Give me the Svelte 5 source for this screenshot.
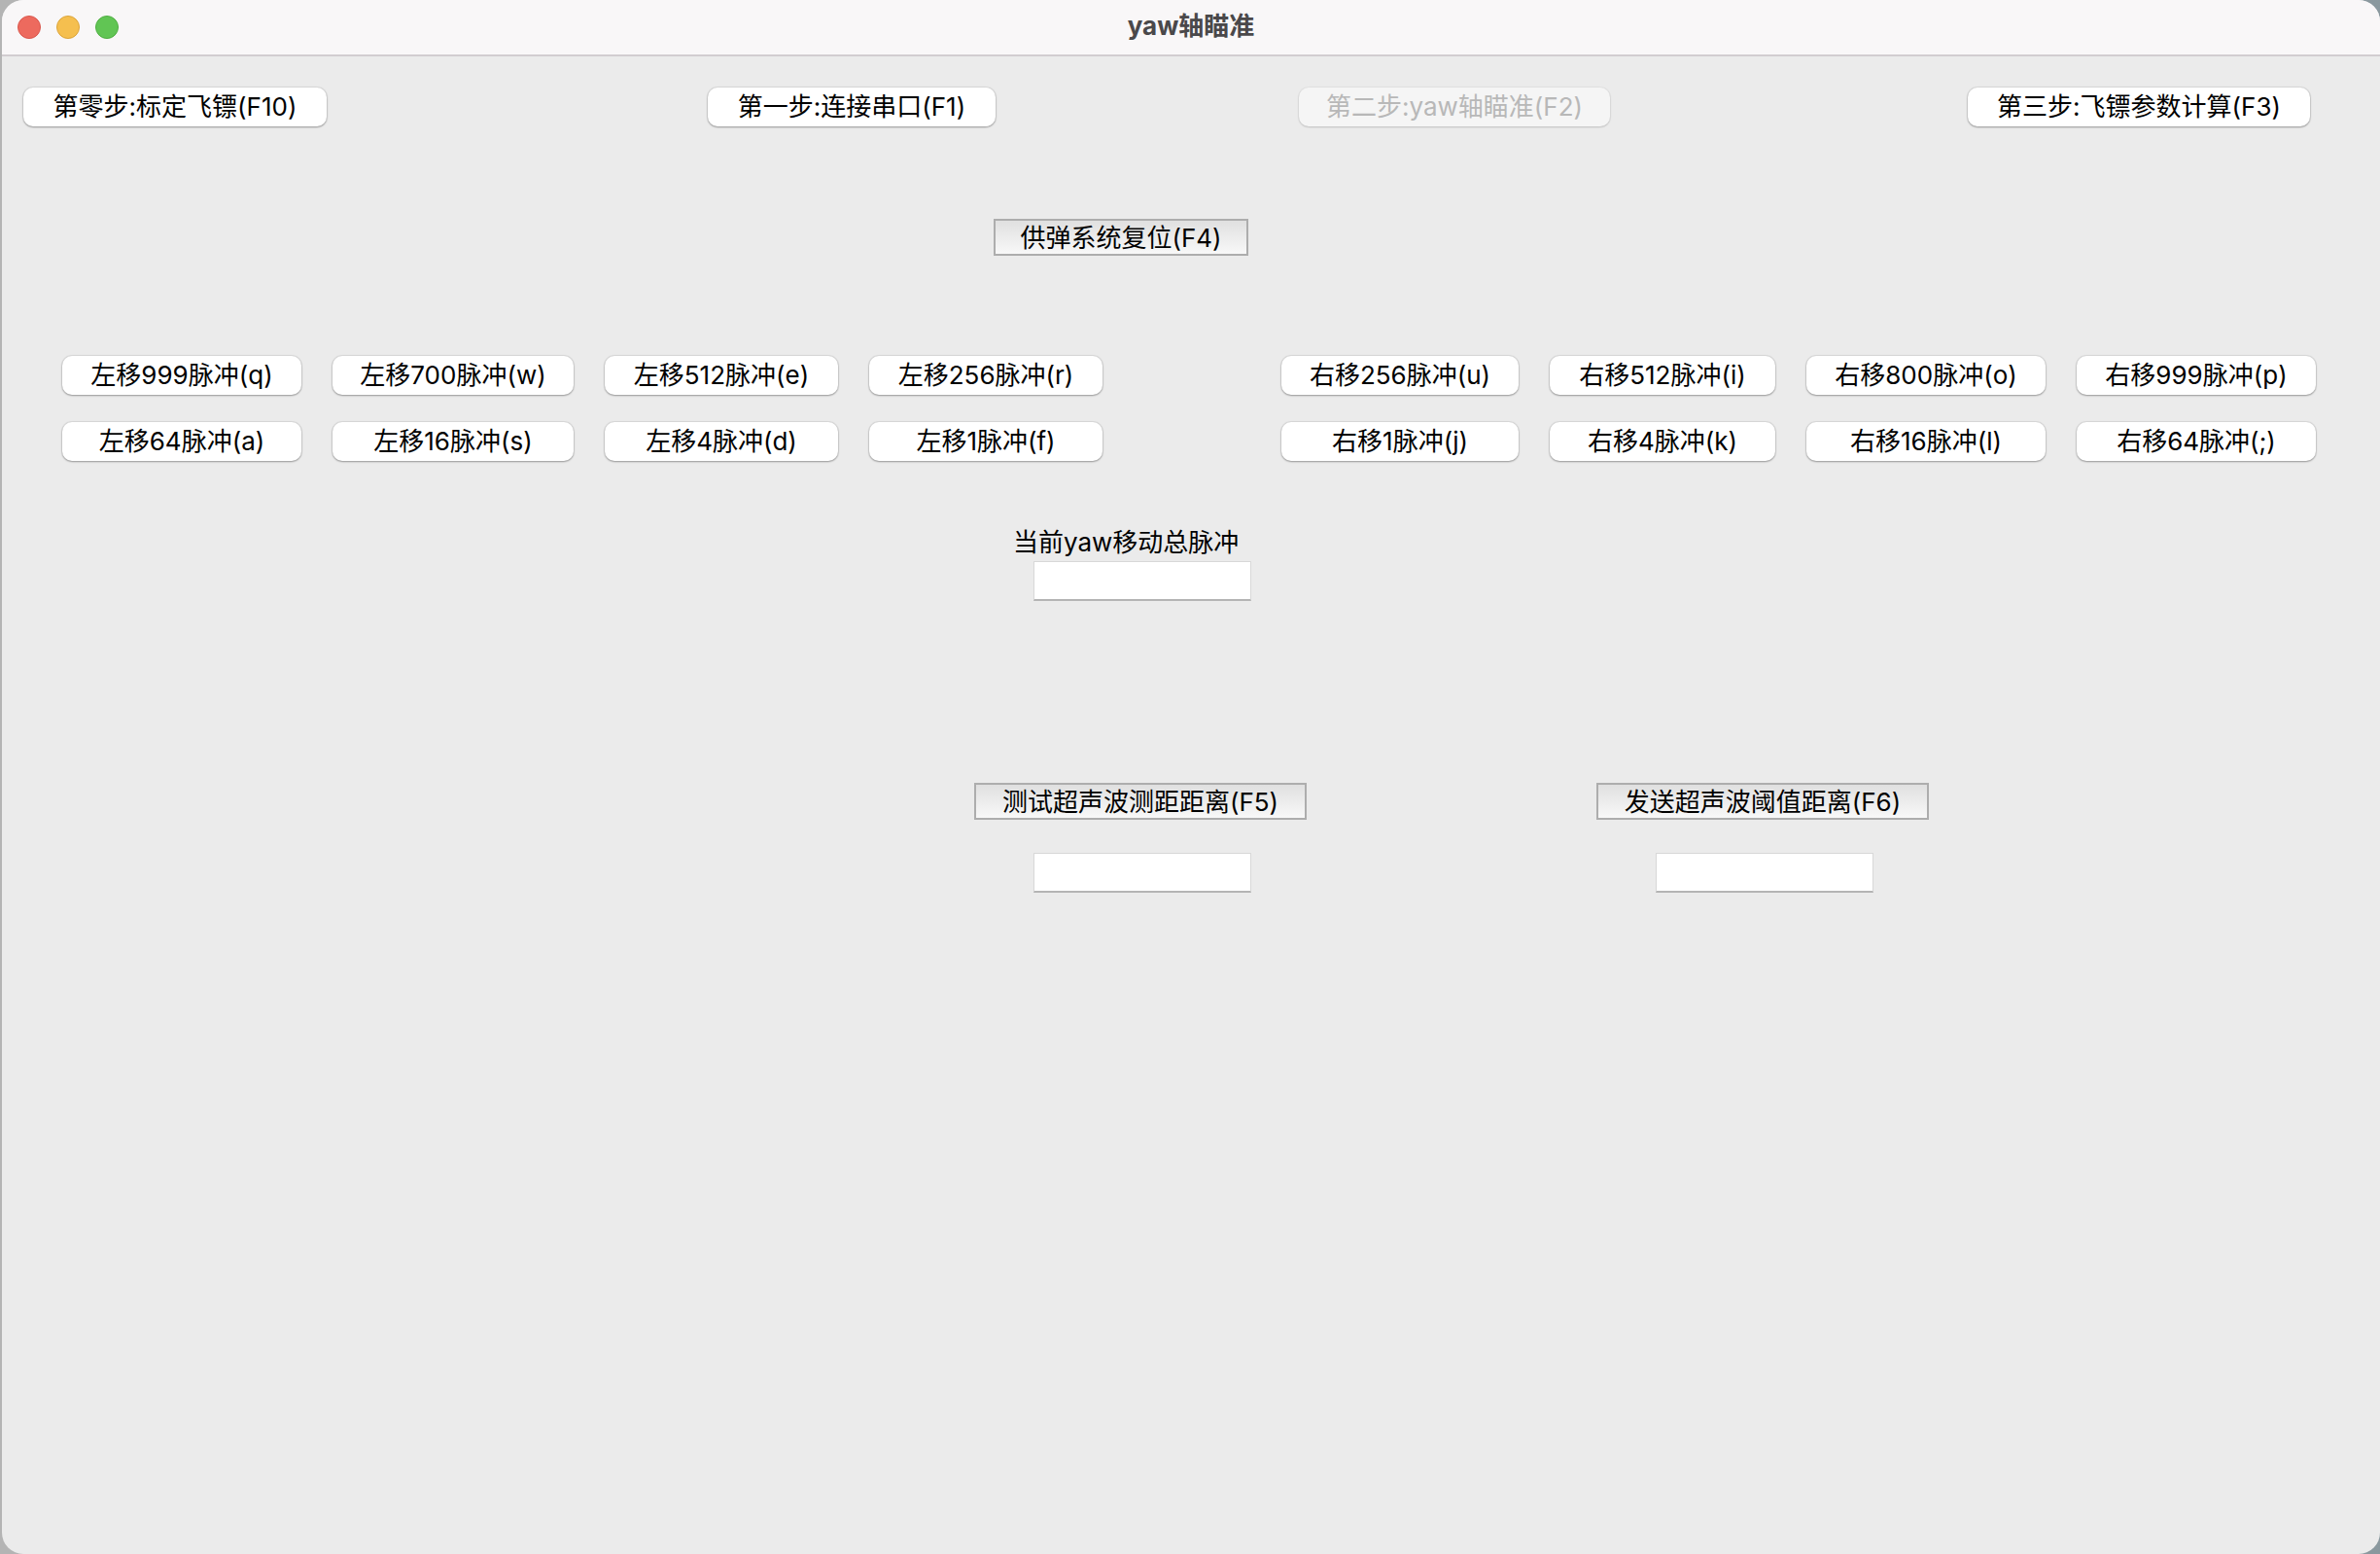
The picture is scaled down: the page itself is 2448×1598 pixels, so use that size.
<script>
  const steps = [
    { label: '第零步:标定飞镖(F10)', size: 'w312' },
    { label: '第一步:连接串口(F1)', size: 'w296' },
    { label: '第二步:yaw轴瞄准(F2)', size: 'w320', disabled: true },
    { label: '第三步:飞镖参数计算(F3)', size: 'w352' }
  ];

  const moves = [
    ['左移999脉冲(q)', '左移700脉冲(w)', '左移512脉冲(e)', '左移256脉冲(r)', null,
     '右移256脉冲(u)', '右移512脉冲(i)', '右移800脉冲(o)', '右移999脉冲(p)'],
    ['左移64脉冲(a)', '左移16脉冲(s)', '左移4脉冲(d)', '左移1脉冲(f)', null,
     '右移1脉冲(j)', '右移4脉冲(k)', '右移16脉冲(l)', '右移64脉冲(;)']
  ];

  const ranges = [
    { id: 'measured', label: '测试超声波测距距离(F5)' },
    { id: 'threshold', label: '发送超声波阈值距离(F6)' }
  ];
</script>

<div class="desktop">
  <main class="window">
    <header class="titlebar">
      <div class="lights">
        <button class="light close" aria-label="关闭"></button>
        <button class="light minimize" aria-label="最小化"></button>
        <button class="light zoom" aria-label="缩放"></button>
      </div>
      <h1>yaw轴瞄准</h1>
    </header>

    <nav class="steps">
      {#each steps as step}
        <button class="push {step.size}" disabled={step.disabled}>{step.label}</button>
      {/each}
    </nav>

    <section class="reset">
      <button class="bevel">供弹系统复位(F4)</button>
    </section>

    <section class="moves">
      {#each moves as row}
        {#each row as label}
          {#if label}
            <button class="push">{label}</button>
          {:else}
            <span></span>
          {/if}
        {/each}
      {/each}
    </section>

    <section class="total">
      <div class="field">
        <label for="total">当前yaw移动总脉冲</label>
        <input id="total" type="text" />
      </div>
    </section>

    <section class="ranges">
      <span></span>
      {#each ranges as range}
        <div class="range">
          <button class="bevel wide">{range.label}</button>
          <input id={range.id} type="text" aria-label={range.label} />
        </div>
      {/each}
    </section>
  </main>
</div>

<style>
  :global(body) {
    margin: 0;
  }

  .desktop,
  .desktop * {
    box-sizing: border-box;
  }

  .desktop {
    display: flex;
    min-height: 100vh;
    padding-left: 2px;
    background: linear-gradient(90deg, #b4b4b4, #b4b4b4 50%, #8a989e);
    font-family: Inter, 'Noto Sans CJK SC', sans-serif;
    font-size: 26px;
    line-height: 32px;
    color: #000;
  }

  .window {
    flex: 1;
    min-width: 0;
    overflow: hidden;
    border-radius: 22px;
    background: #ebebeb;
  }

  .titlebar {
    display: grid;
    grid-template-columns: 1fr auto 1fr;
    align-items: center;
    height: 58px;
    padding: 0 16px;
    border-bottom: 2px solid #d2cdd0;
    background: #f9f7f8;
  }

  .lights {
    display: flex;
    gap: 16px;
  }

  .light {
    width: 24px;
    height: 24px;
    padding: 0;
    border: 1px solid;
    border-radius: 50%;
  }

  .close {
    border-color: #d9584e;
    background: #ed6a5e;
  }

  .minimize {
    border-color: #dba43b;
    background: #f5bf4f;
  }

  .zoom {
    border-color: #50ae43;
    background: #61c554;
  }

  h1 {
    margin: 0;
    padding-bottom: 2px;
    font-size: 26px;
    line-height: 32px;
    font-weight: 700;
    color: #4a484a;
  }

  button {
    font: inherit;
    color: inherit;
    white-space: nowrap;
  }

  .push {
    height: 40px;
    padding: 0;
    border: 0;
    border-radius: 10px;
    background: #fff;
    box-shadow: 0 0 1px 1px rgba(0, 0, 0, 0.08), 0 1px 2px rgba(0, 0, 0, 0.3);
  }

  .push:disabled {
    background: #f5f5f5;
    box-shadow: 0 0 1px 1px rgba(0, 0, 0, 0.04), 0 1px 2px rgba(0, 0, 0, 0.15);
    color: #b8b8b8;
  }

  .w312 {
    width: 312px;
  }

  .w296 {
    width: 296px;
  }

  .w320 {
    width: 320px;
  }

  .w352 {
    width: 352px;
  }

  .bevel {
    width: 262px;
    height: 38px;
    padding: 2px 0 0;
    border: 2px solid #adadad;
    background: linear-gradient(#e0e0e0, #f8f8f8);
  }

  .bevel.wide {
    width: 342px;
  }

  input {
    width: 224px;
    height: 41px;
    padding: 0 8px;
    border: 1px solid #d8d8d8;
    border-bottom: 2px solid #b4b4b4;
    background: #fff;
    font: inherit;
  }

  .steps {
    display: grid;
    grid-template-columns: 704fr 608fr 688fr 424fr;
    justify-items: start;
    padding: 32px 0 0 22px;
  }

  .reset {
    display: grid;
    grid-template-columns: 1020fr auto 1164fr;
    padding-top: 95px;
  }

  .reset .bevel {
    grid-column: 2;
  }

  .moves {
    display: grid;
    grid-template-columns: 246fr 248fr 240fr 240fr 120fr 244fr 232fr 246fr 246fr;
    gap: 28px 32px;
    padding: 103px 66px 0 62px;
  }

  .total {
    display: grid;
    grid-template-columns: 1040fr auto 1161fr;
    padding-top: 68px;
  }

  .field {
    display: flex;
    grid-column: 2;
    flex-direction: column;
    gap: 3px;
    width: 245px;
  }

  .field input {
    align-self: flex-end;
  }

  .ranges {
    display: grid;
    grid-template-columns: 1000fr 640fr 806fr;
    padding-top: 187px;
  }

  .range {
    display: flex;
    flex-direction: column;
    align-items: flex-start;
    gap: 34px;
  }

  .range input {
    margin-left: 61px;
  }
</style>
